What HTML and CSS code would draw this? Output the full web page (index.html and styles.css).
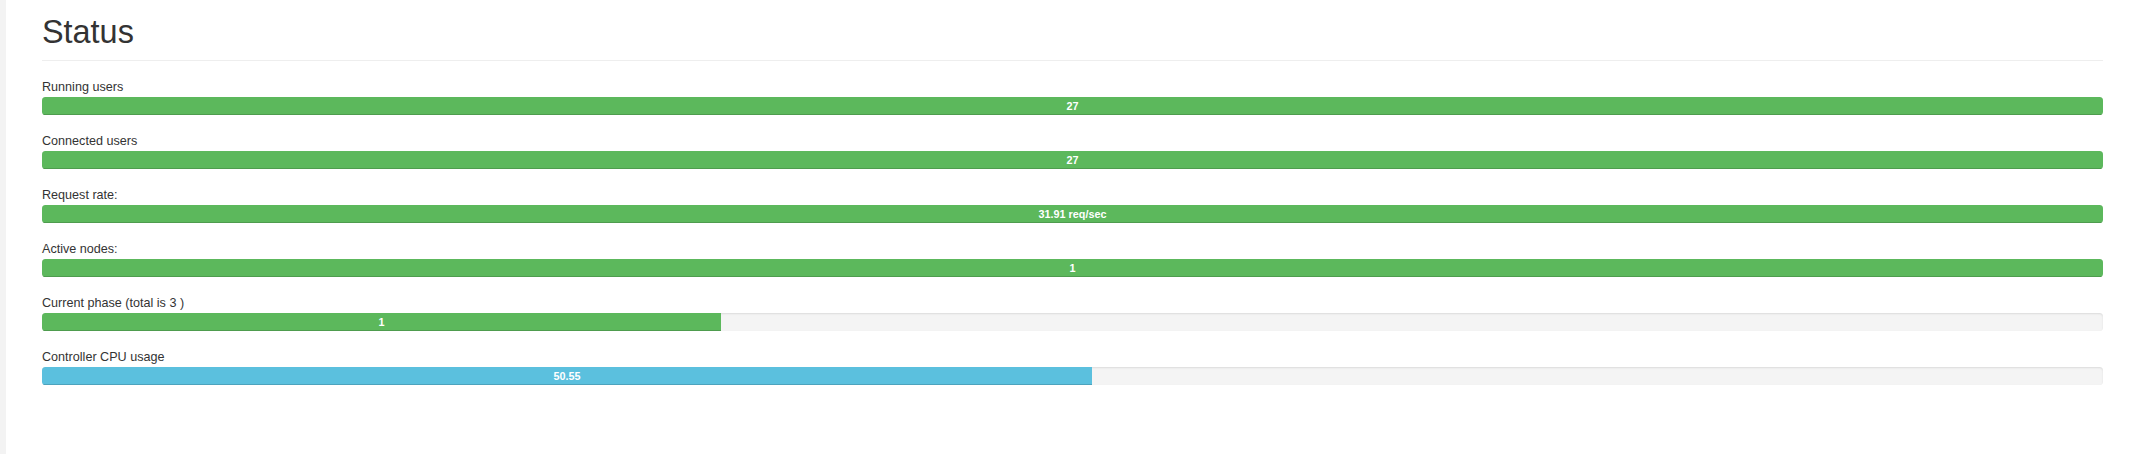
FILE: index.html
```html
<!DOCTYPE html>
<html>
<head>
<meta charset="utf-8">
<link rel="stylesheet" href="styles.css">
</head>
<body>
<div class="layout">
  <div class="sidebar"></div>
  <main class="main">
    <div class="page-header"><h1>Status</h1></div>
    <div class="stat">
      <div class="label">Running users</div>
      <div class="progress"><div class="bar green" style="width:100%">27</div></div>
    </div>
    <div class="stat">
      <div class="label">Connected users</div>
      <div class="progress"><div class="bar green" style="width:100%">27</div></div>
    </div>
    <div class="stat">
      <div class="label">Request rate:</div>
      <div class="progress"><div class="bar green" style="width:100%">31.91 req/sec</div></div>
    </div>
    <div class="stat">
      <div class="label">Active nodes:</div>
      <div class="progress"><div class="bar green" style="width:100%">1</div></div>
    </div>
    <div class="stat">
      <div class="label">Current phase (total is 3 )</div>
      <div class="progress"><div class="bar green" style="width:32.95%">1</div></div>
    </div>
    <div class="stat">
      <div class="label">Controller CPU usage</div>
      <div class="progress"><div class="bar blue" style="width:50.95%">50.55</div></div>
    </div>
  </main>
</div>
</body>
</html>
```
FILE: styles.css
```css
html, body {
  margin: 0;
  padding: 0;
  background: #fff;
}
body {
  font-family: "Liberation Sans", Arial, sans-serif;
  font-size: 12.6px;
  line-height: 18px;
  color: #333;
}
.layout {
  display: flex;
  min-height: 454px;
}
.sidebar {
  width: 6px;
  flex: 0 0 6px;
  background: #f3f3f3;
}
.main {
  flex: 1;
  padding: 0 27px 0 36px;
}
.page-header {
  padding-top: 14px;
  padding-bottom: 10px;
  border-bottom: 1px solid #eee;
  margin-bottom: 18px;
}
.page-header h1 {
  margin: 0;
  font-size: 32.4px;
  font-weight: 500;
  line-height: 36px;
  color: #333;
}
.stat {
  margin-bottom: 18px;
}
.label {
  height: 18px;
  line-height: 17px;
}
.progress {
  display: flex;
  height: 18px;
  background: #f4f4f4;
  border-radius: 3.6px;
  overflow: hidden;
  box-shadow: inset 0 1px 2px rgba(0, 0, 0, 0.1);
}
.bar {
  height: 18px;
  line-height: 18px;
  font-size: 10.8px;
  font-weight: bold;
  color: #fff;
  text-align: center;
  box-shadow: inset 0 -1px 0 rgba(0, 0, 0, 0.15);
}
.green { background: #5cb85c; }
.blue { background: #5bc0de; }
```
